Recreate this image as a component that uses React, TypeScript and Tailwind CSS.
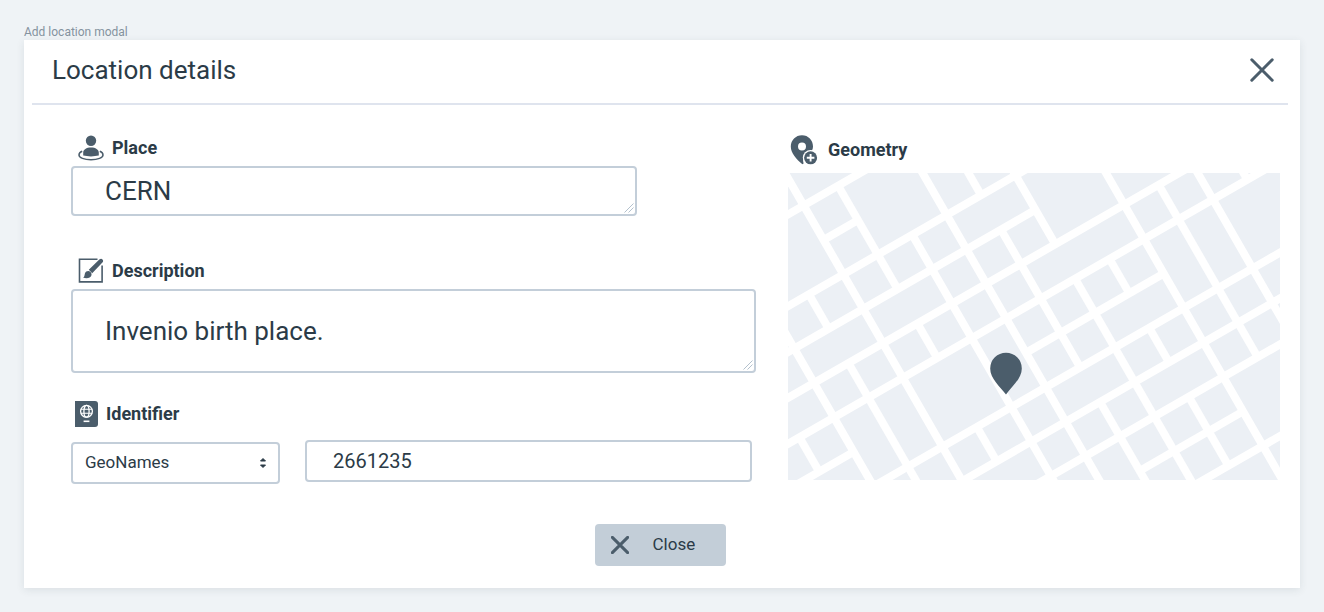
import type { ReactNode } from "react";

type Road = [at: number, from: number, to: number];

// The street grid is tilted; roads sit on whole grid lines.
const streets: Road[] = [
  [0, -2, 3],
  [1, 0, 1],
  [2, -3, 7],
  [3, -3, 5],
  [4, -4, 10],
  [5, -5, 12],
  [6, -5, -2],
  [6, 3, 7],
  [7, -3, 12],
  [8, -1, 11],
  [9, 1, 11],
  [10, 4, 7],
  [11, 5, 10],
];

const avenues: Road[] = [
  [-3, 5, 6],
  [-2, 2, 9],
  [-1, 2, 3],
  [-1, 4, 9],
  [0, -2, 10],
  [1, 0, 3],
  [1, 4, 5],
  [1, 7, 8],
  [2, 2, 12],
  [3, -1, 12],
  [4, -1, 2],
  [4, 3, 7],
  [4, 8, 12],
  [5, -1, 4],
  [5, 5, 13],
  [6, 5, 6],
  [6, 7, 8],
  [6, 9, 11],
  [7, 1, 14],
  [8, 4, 9],
  [9, 2, 11],
  [10, 3, 5],
];

function StreetMap() {
  return (
    <svg viewBox="0 0 492 307" role="img" aria-label="Map" className="block w-full">
      <rect width="492" height="307" fill="#ecf0f5" />
      <g
        transform="translate(15.7 32.5) rotate(-29.9) scale(39.75)"
        stroke="#ffffff"
        strokeWidth="0.2"
      >
        {streets.map(([at, from, to]) => (
          <line key={`s${at}:${from}`} x1={from} x2={to} y1={at} y2={at} />
        ))}
        {avenues.map(([at, from, to]) => (
          <line key={`a${at}:${from}`} x1={at} x2={at} y1={from} y2={to} />
        ))}
      </g>
      <path
        d="M218 221.500C212 213.500 202.200 205.500 202.200 195.500a15.800 15.800 0 0 1 31.600 0C233.800 205.500 224 213.500 218 221.500z"
        fill="#4b5d6b"
      />
    </svg>
  );
}

function PlaceIcon() {
  return (
    <svg viewBox="0 0 26 26" className="size-[26px]" aria-hidden="true">
      <circle cx="13" cy="5.800" r="5.200" fill="#4b5d6b" />
      <path d="M5.200 20.600v-3c0-3 3.200-5.100 7.800-5.100s7.800 2.100 7.800 5.100v3c-4.600 1.100-11 1.100-15.600 0z" fill="#4b5d6b" />
      <path
        d="M4.200 16.300C2 17.200 1 18.500 1 19.900c0 2.800 5.200 4.900 12 4.900s12-2.100 12-4.900c0-1.400-1-2.700-3.200-3.600"
        fill="none"
        stroke="#4b5d6b"
        strokeWidth="1.500"
      />
    </svg>
  );
}

function DescriptionIcon() {
  return (
    <svg viewBox="0 0 26 26" className="size-[26px]" aria-hidden="true">
      <path d="M19.500 1.300H1.500v22.600h22.600V7.500" fill="none" stroke="#4b5d6b" strokeWidth="1.600" />
      <path d="M10.800 11.700L21.300 1.600c1-.9 2.300-1 3.200-.2s.8 2.200-.1 3.200L14.200 15.200z" fill="#4b5d6b" />
      <path d="M5 19.500c1.700-.4 1.300-2.300 2-4.200.8-2.300 3.700-3.100 5.500-1.400 1.800 1.800 1.200 4.500-.9 5.600-1.900 1-4.600.8-6.600 0z" fill="#4b5d6b" />
    </svg>
  );
}

function IdentifierIcon() {
  return (
    <svg viewBox="0 0 23 26" className="h-[26px] w-[23px]" aria-hidden="true">
      <path d="M0 0h20a3 3 0 0 1 3 3v20a3 3 0 0 1-3 3H0z" fill="#4b5d6b" />
      <g fill="none" stroke="#ffffff" strokeWidth="1.300">
        <circle cx="11.500" cy="10.300" r="5.900" />
        <ellipse cx="11.500" cy="10.300" rx="2.600" ry="5.900" />
        <path d="M5.800 8.300h11.400M5.800 12.300h11.400" strokeWidth="1.100" />
        <path d="M8.600 20.300h5.800" strokeWidth="1.600" />
      </g>
    </svg>
  );
}

function GeometryIcon() {
  return (
    <svg viewBox="0 0 28 30" className="h-[30px] w-7" aria-hidden="true">
      <path
        fillRule="evenodd"
        d="M12 0.300C5.700 0.300 .8 5.200 .8 11.500c0 6.500 5.300 12.500 11.600 17.800l1.200-.9C12.400 24.500 14 16.800 22 15.600c.7-1.400 1-2.700 1-4.100C23 5.200 18.300.3 12 .3zM12 7.500a4 4 0 1 1 0 8 4 4 0 0 1 0-8z"
        fill="#4b5d6b"
      />
      <circle cx="20.600" cy="22.800" r="7.800" fill="#ffffff" />
      <circle cx="20.600" cy="22.800" r="6.500" fill="#4b5d6b" />
      <path d="M20.600 19v7.600M16.800 22.800h7.600" stroke="#ffffff" strokeWidth="1.900" />
    </svg>
  );
}

function Cross({ className, weight }: { className: string; weight: number }) {
  return (
    <svg viewBox="0 0 24 24" className={className} aria-hidden="true">
      <path
        d="M1.800 1.800l20.400 20.400M22.200 1.800l-20.400 20.400"
        stroke="#4b5d6b"
        strokeWidth={weight}
        strokeLinecap="round"
      />
    </svg>
  );
}

function ResizeGrip() {
  return (
    <svg
      viewBox="0 0 10 10"
      className="pointer-events-none absolute right-[3px] bottom-[3px] size-[10px]"
      aria-hidden="true"
    >
      <path d="M0.500 9.500l9-9M4.500 9.500l5-5" stroke="#b3c1cd" strokeWidth="1" />
    </svg>
  );
}

function FieldLabel({ htmlFor, icon, children }: { htmlFor: string; icon: ReactNode; children: ReactNode }) {
  return (
    <label
      htmlFor={htmlFor}
      className="flex h-[30px] items-center gap-2 text-lg font-bold"
    >
      {icon}
      {children}
    </label>
  );
}

export default function App() {
  return (
    <div className="min-h-screen bg-[#eff3f6] p-6 font-['Roboto','Liberation_Sans',sans-serif] text-[#2b3b47]">
      <p className="text-xs leading-4 text-[#84929e]">Add location modal</p>

      <section
        role="dialog"
        aria-labelledby="dialog-title"
        className="bg-white shadow-[0_2px_8px_rgba(43,59,71,0.1)]"
      >
        <header className="mr-3 ml-2 flex h-[65px] items-center justify-between border-b-2 border-[#dfe4ee] pr-3.5 pb-1 pl-5">
          <h1 id="dialog-title" className="text-[26px] leading-8">
            Location details
          </h1>
          <button type="button" aria-label="Close dialog" className="cursor-pointer">
            <Cross className="size-6" weight={3} />
          </button>
        </header>

        <form>
          <div className="grid grid-cols-[685fr_492fr] gap-8 pt-7 pr-5 pl-[47px]">
            <div>
              <div className="pl-[7px]">
                <FieldLabel htmlFor="place" icon={<PlaceIcon />}>
                  Place
                </FieldLabel>
              </div>
              <div className="relative mt-[3px] max-w-[566px]">
                <textarea
                  id="place"
                  rows={1}
                  defaultValue="CERN"
                  className="block h-[50px] w-full resize-none overflow-hidden rounded border-2 border-[#c3ced9] bg-white px-8 pt-[7px] text-[26px] leading-8"
                />
                <ResizeGrip />
              </div>

              <div className="mt-10 pl-[7px]">
                <FieldLabel htmlFor="description" icon={<DescriptionIcon />}>
                  Description
                </FieldLabel>
              </div>
              <div className="relative mt-[3px]">
                <textarea
                  id="description"
                  defaultValue="Invenio birth place."
                  className="block h-[84px] w-full resize-none overflow-hidden rounded border-2 border-[#c3ced9] bg-white px-8 py-6 text-[26px] leading-8"
                />
                <ResizeGrip />
              </div>

              <div className="mt-[26px] pl-1">
                <FieldLabel htmlFor="identifier" icon={<IdentifierIcon />}>
                  Identifier
                </FieldLabel>
              </div>
              <div className="mt-[11px] flex items-start gap-[25px] pr-1">
                <div className="relative mt-0.5 w-[209px] shrink-0">
                  <select
                    aria-label="Identifier scheme"
                    defaultValue="GeoNames"
                    className="block h-[42px] w-full appearance-none rounded border-2 border-[#c3ced9] bg-white px-3 text-[17px]"
                  >
                    <option>GeoNames</option>
                  </select>
                  <svg
                    viewBox="0 0 8 12"
                    className="pointer-events-none absolute top-[15px] right-[13px] h-3 w-2"
                    aria-hidden="true"
                  >
                    <path
                      d="M4 1.500L6.500 4h-5zM4 10.500L6.500 8h-5z"
                      fill="#2b3b47"
                      stroke="#2b3b47"
                      strokeLinejoin="round"
                    />
                  </svg>
                </div>
                <input
                  id="identifier"
                  type="text"
                  defaultValue="2661235"
                  className="block h-[42px] min-w-0 flex-1 rounded border-2 border-[#c3ced9] bg-white px-[26px] text-xl"
                />
              </div>
            </div>

            <div>
              <h2 className="flex h-[34px] items-center gap-2.5 pl-0.5 text-lg font-bold">
                <GeometryIcon />
                Geometry
              </h2>
              <div className="mt-1.5">
                <StreetMap />
              </div>
            </div>
          </div>

          <footer className="flex justify-center pt-10 pr-1 pb-[22px]">
            <button
              type="button"
              className="flex h-[42px] w-[131px] cursor-pointer items-center gap-6 rounded bg-[#c3ced8] pl-4 text-[17px]"
            >
              <Cross className="size-[18px]" weight={4} />
              Close
            </button>
          </footer>
        </form>
      </section>
    </div>
  );
}
